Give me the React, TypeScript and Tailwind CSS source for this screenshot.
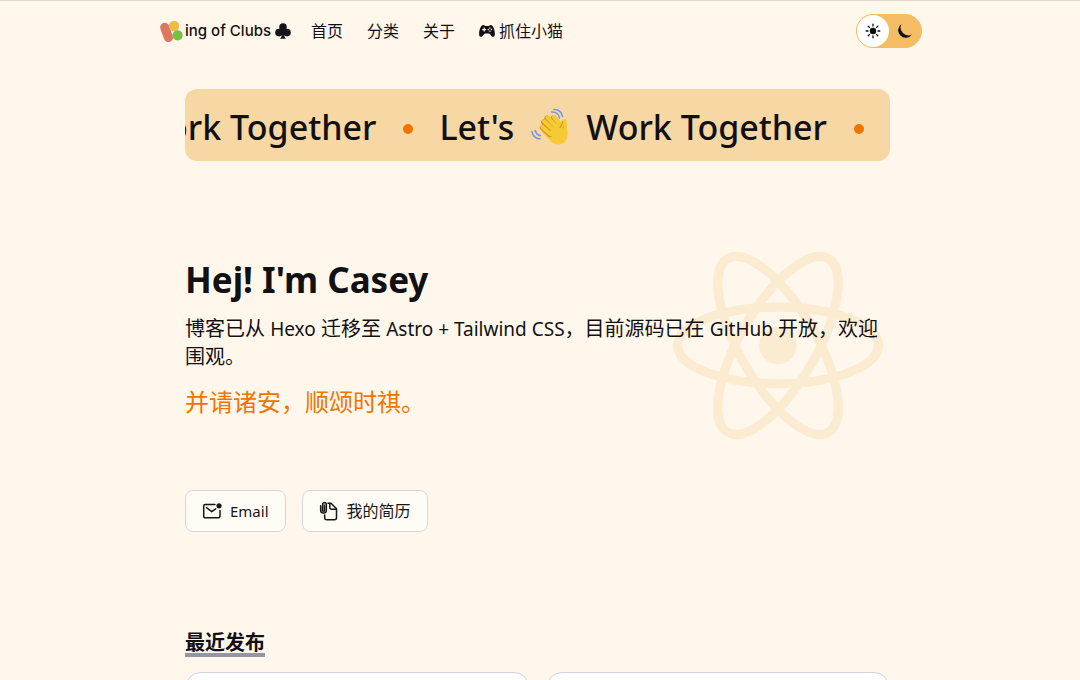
import { useState } from "react";

const sans = "font-['Noto_Sans','Noto_Sans_CJK_SC',sans-serif]";

function LogoMark() {
  return (
    <svg viewBox="0 0 25 24" className="h-6 w-[25px] shrink-0" aria-hidden="true">
      <rect x="2" y="3.4" width="9.2" height="20" rx="4.600" fill="#dc7862" transform="rotate(-20 6.6 13.400)" />
      <circle cx="14" cy="7" r="5.2" fill="#eebb44" />
      <circle cx="17.6" cy="16.400" r="5.1" fill="#73c245" />
    </svg>
  );
}

function Club() {
  return (
    <svg viewBox="0 0 16 16" className="size-4" fill="#151518" aria-hidden="true">
      <circle cx="8" cy="4.1" r="3.8" />
      <circle cx="4" cy="9.6" r="3.8" />
      <circle cx="12" cy="9.6" r="3.8" />
      <path d="M7 6h2v4c0 3 .8 4.700 2 5.800H5c1.200-1.100 2-2.800 2-5.800z" />
    </svg>
  );
}

function Gamepad() {
  return (
    <svg viewBox="0 0 16 16" className="size-4" aria-hidden="true">
      <path
        d="M4.200 2C5.400 2 5.700 3 6.500 3h3c.8 0 1.100-1 2.300-1 2.500 0 4.100 5.400 4.100 9 0 3.600-2.600 3.500-4.100 1.200-.8-1.200-1.300-1.700-2.300-1.700h-3c-1 0-1.500.5-2.300 1.700C2.700 14.500.1 14.600.1 11c0-3.600 1.600-9 4.100-9z"
        fill="#111114"
      />
      <path d="M5.200 4.600v4M3.200 6.600h4" stroke="#fff7ec" strokeWidth="1.100" />
      <g fill="#fff7ec">
        <circle cx="10.900" cy="5" r=".75" />
        <circle cx="10.900" cy="8.200" r=".75" />
        <circle cx="9.300" cy="6.600" r=".75" />
        <circle cx="12.500" cy="6.600" r=".75" />
      </g>
    </svg>
  );
}

function Sun() {
  return (
    <svg viewBox="0 0 16 16" className="size-4" stroke="#0b0b0d" strokeWidth="1.300" strokeLinecap="round" aria-hidden="true">
      <circle cx="8" cy="8" r="3.200" fill="#0b0b0d" stroke="none" />
      <path d="M8 1.200v1.800M8 13v1.800M1.200 8H3M13 8h1.800M3.200 3.200l1.200 1.200M11.600 11.600l1.200 1.200M3.200 12.800l1.200-1.200M11.600 4.400l1.200-1.200" />
    </svg>
  );
}

function Moon() {
  return (
    <svg viewBox="0 0 16 16" className="size-4" fill="#111114" aria-hidden="true">
      <path d="M4.600 .9A7.500 7.500 0 1 0 15 11.200 7.600 7.600 0 0 1 4.600 .9z" />
    </svg>
  );
}

function Wave() {
  return (
    <svg viewBox="0 0 38 38" className="h-[38px] w-[38px] shrink-0" fill="none" strokeLinecap="round" aria-hidden="true">
      <path
        d="M10.500 23.500 18 31.500c4.500 5 9.500 6 13.500 4 4-2 5.500-6 5-11.500-.4-4-.6-7-1-10.500-.3-3.200-4-3.300-4.500 0l-.5 3.700-6-8.400"
        fill="#f5ca35"
      />
      <path d="M30 19 22.500 9.800M26.500 21 16 10.200M22 23 12.800 14.200M19 26.500l-7.500-7" stroke="#cf9220" strokeWidth="5.400" />
      <path d="M30.500 18.500 23 9M27 20.500 16.600 9.500M23 22.500 13.300 13.500M19.500 26l-8-7" stroke="#f5ca35" strokeWidth="4.300" />
      <path d="m18 24 13-8 3 12-9 5z" fill="#f5ca35" />
      <path d="M31.500 13.500c-.2 3-1 4.500-2.500 6" stroke="#cf9220" strokeWidth="1.200" />
      <g stroke="#6f95ec" strokeWidth="1.500">
        <path d="M20.500 4c4-.6 7.400 2 8 6M23 1.500c4.500-.3 8 2.800 8.500 7" />
        <path d="M1 23.500c.4 4 3.600 7.200 8 7.400M4.300 22.500c.5 2.600 2.300 4.400 5 5.300" />
      </g>
    </svg>
  );
}

function Atom() {
  return (
    <svg viewBox="-11.500 -10.232 23 20.463" className="h-auto w-[210px]" fill="none" stroke="#fbebd1" aria-hidden="true">
      <circle r="2.050" fill="#fbebd1" stroke="none" />
      <ellipse rx="11" ry="4.200" />
      <ellipse rx="11" ry="4.200" transform="rotate(60)" />
      <ellipse rx="11" ry="4.200" transform="rotate(120)" />
    </svg>
  );
}

function MailIcon() {
  return (
    <svg viewBox="0 0 20 20" className="size-5" fill="none" stroke="#17171a" strokeWidth="1.500" strokeLinecap="round" strokeLinejoin="round" aria-hidden="true">
      <path d="M13 3.500H3.200A1.500 1.500 0 0 0 1.700 5v10.300a1.500 1.500 0 0 0 1.500 1.500h13.300a1.500 1.500 0 0 0 1.500-1.500V9.500" />
      <path d="m4.500 6.700 5.300 4 3.900-2.900" />
      <circle cx="17" cy="4.800" r="2.600" fill="#17171a" stroke="none" />
    </svg>
  );
}

function ResumeIcon() {
  return (
    <svg viewBox="0 0 20 20" className="size-5" fill="none" stroke="#17171a" strokeWidth="1.500" strokeLinecap="round" strokeLinejoin="round" aria-hidden="true">
      <path d="M9 2.200h3L17.500 7.700v9a2 2 0 0 1-2 2H7.700a2 2 0 0 1-2-2V14" />
      <path d="M10.800 2.500v4a1.700 1.700 0 0 0 1.700 1.700h4.700" />
      <path
        d="M1.500 4.500v4.700a3 3 0 0 0 6 0V3.400a2 2 0 0 0-4 0v5.800a1 1 0 0 0 2 0V4.500"
        fill="#8a8987"
        strokeWidth="1.200"
      />
    </svg>
  );
}

function Phrase() {
  return (
    <span className="flex shrink-0 items-center">
      <span>Let's</span>
      <span className="mx-[17px]">
        <Wave />
      </span>
      <span>Work Together</span>
      <span className="mt-1 mr-[26px] ml-[27px] size-[10px] rounded-full bg-[#f07400]" />
    </span>
  );
}

const button =
  "flex h-[42px] items-center gap-2 rounded-lg border border-[#d5d7df] bg-[#fffbf5] px-4 text-[#151518]";

export default function App() {
  const [dark, setDark] = useState(false);
  return (
    <div className={`min-h-screen overflow-hidden border-t border-[#dedacd] bg-[#fff7ec] text-[#111114] ${sans}`}>
      <div className="pl-0.5">
        <header className="mx-auto flex h-[60px] max-w-[762px] items-center justify-between">
          <div className="flex items-center gap-5">
            <a href="#home" className="flex items-center">
              <LogoMark />
              <span className="mr-1 font-['Inter',sans-serif] text-[15px] font-medium">ing of Clubs</span>
              <Club />
            </a>
            <nav className="flex items-center gap-6 text-base">
              <a href="#home">首页</a>
              <a href="#categories">分类</a>
              <a href="#about">关于</a>
              <a href="#cat" className="flex items-center gap-1">
                <Gamepad />
                抓住小猫
              </a>
            </nav>
          </div>
          <button
            type="button"
            aria-label="Theme"
            aria-pressed={dark}
            onClick={() => setDark(!dark)}
            className="flex h-[34px] items-center rounded-full border border-[#f4bc63] bg-[#f4bc63]"
          >
            <span className="flex size-8 items-center justify-center rounded-full bg-white">
              <Sun />
            </span>
            <span className="flex size-8 items-center justify-center">
              <Moon />
            </span>
          </button>
        </header>
      </div>

      <div className="pr-[5px]">
        <main className="mx-auto max-w-[705px]">
          <div className="mt-7 flex h-[72px] items-center justify-end overflow-hidden rounded-xl bg-[#f7d8a5] pt-1 text-[34px] font-medium">
            <Phrase />
            <Phrase />
          </div>

          <section className="relative mt-[90px]">
            <div className="absolute top-px right-[7px]">
              <Atom />
            </div>
            <div className="relative">
              <h1 className="pt-1 text-[35px] leading-[50px] font-bold">Hej! I'm Casey</h1>
              <p className="mt-[10px] text-xl leading-7">
                博客已从 <span className="text-[19px]">Hexo</span> 迁移至{" "}
                <span className="text-[19px]">Astro + Tailwind CSS</span>，目前源码已在{" "}
                <span className="text-[19px]">GitHub</span> 开放，欢迎围观。
              </p>
              <p className="mt-[15px] text-2xl leading-8 text-[#f07400]">并请诸安，顺颂时祺。</p>
            </div>
          </section>

          <div className="mt-[72px] flex gap-4">
            <button type="button" className={`${button} text-[15px]`}>
              <MailIcon />
              Email
            </button>
            <button type="button" className={`${button} text-base`}>
              <ResumeIcon />
              我的简历
            </button>
          </div>

          <section className="mt-[97px]">
            <h2 className="flex text-xl leading-7 font-bold">
              <span className="h-7 border-b-4 border-[#9695a3]">最近发布</span>
            </h2>
            <div className="mt-[15px] grid grid-cols-2 gap-4">
              <article className="h-40 rounded-2xl border border-[#cfd3e2] bg-white" />
              <article className="h-40 rounded-2xl border border-[#cfd3e2] bg-white" />
            </div>
          </section>
        </main>
      </div>
    </div>
  );
}
